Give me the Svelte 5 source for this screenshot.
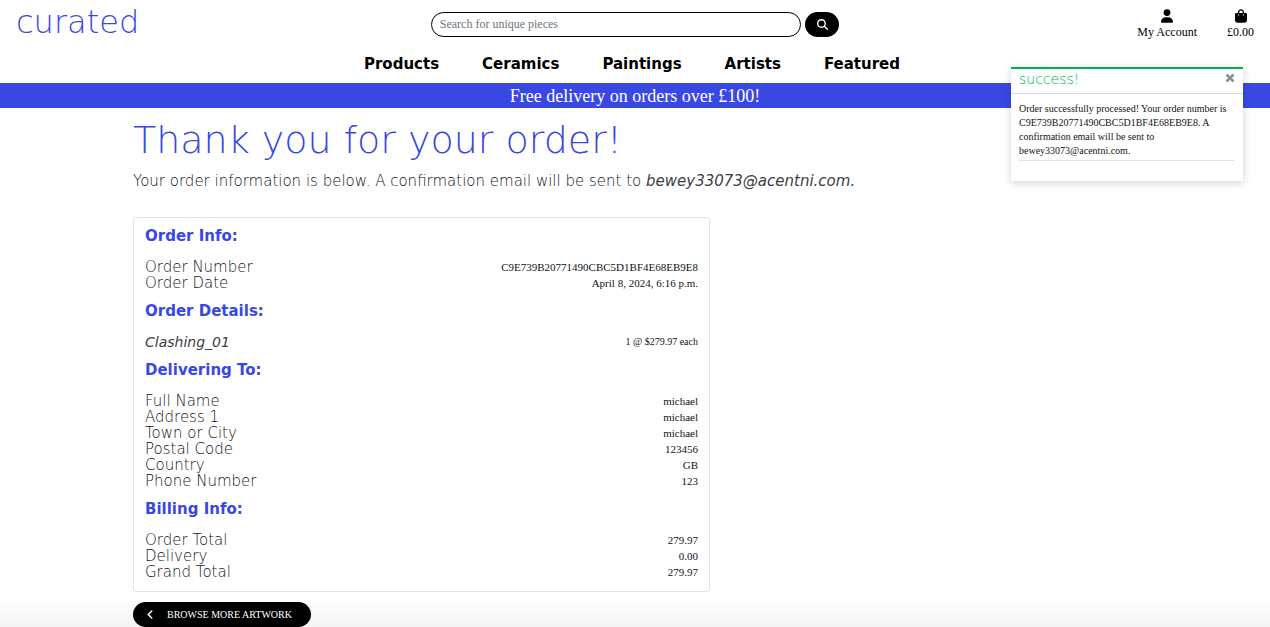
<script>
  const navItems = ['Products', 'Ceramics', 'Paintings', 'Artists', 'Featured'];
  const email = 'bewey33073@acentni.com';
  const orderNumber = 'C9E739B20771490CBC5D1BF4E68EB9E8';

  const sections = [
    {
      title: 'Order Info:',
      rows: [
        { label: 'Order Number', value: orderNumber },
        { label: 'Order Date', value: 'April 8, 2024, 6:16 p.m.' }
      ]
    },
    {
      title: 'Order Details:',
      rows: [{ label: 'Clashing_01', value: '1 @ $279.97 each', item: true }]
    },
    {
      title: 'Delivering To:',
      rows: [
        { label: 'Full Name', value: 'michael' },
        { label: 'Address 1', value: 'michael' },
        { label: 'Town or City', value: 'michael' },
        { label: 'Postal Code', value: '123456' },
        { label: 'Country', value: 'GB' },
        { label: 'Phone Number', value: '123' }
      ]
    },
    {
      title: 'Billing Info:',
      rows: [
        { label: 'Order Total', value: '279.97' },
        { label: 'Delivery', value: '0.00' },
        { label: 'Grand Total', value: '279.97' }
      ]
    }
  ];

  let query = $state('');
  let toastOpen = $state(true);
</script>

<div class="page">
  <header>
    <div class="top">
      <a class="logo" href="#home">curated</a>
      <form class="search" onsubmit={(e) => e.preventDefault()}>
        <input type="search" aria-label="Search" placeholder="Search for unique pieces" bind:value={query} />
        <button type="submit" aria-label="Search">
          <svg viewBox="0 0 512 512" width="11" height="11"><path fill="currentColor" d="M416 208c0 46-15 88-40 123l127 126c12 13 12 33 0 46s-33 12-46 0L331 376c-35 25-77 40-123 40C93 416 0 323 0 208S93 0 208 0s208 93 208 208zM208 352a144 144 0 1 0 0-288 144 144 0 1 0 0 288z" /></svg>
        </button>
      </form>
      <div class="links">
        <a href="#account">
          <svg viewBox="0 0 448 512" width="12" height="14"><path fill="currentColor" d="M224 256a128 128 0 1 0 0-256 128 128 0 1 0 0 256zm-46 48C80 304 0 384 0 482c0 17 13 30 30 30h388c17 0 30-13 30-30 0-98-80-178-178-178z" /></svg>
          <span>My Account</span>
        </a>
        <a href="#bag">
          <svg viewBox="0 0 448 512" width="12" height="14"><path fill="currentColor" d="M112 112C112 50 162 0 224 0s112 50 112 112v32h64c26 0 48 22 48 48v224c0 53-43 96-96 96H96c-53 0-96-43-96-96V192c0-26 22-48 48-48h64zm48 32h128v-32c0-35-29-64-64-64s-64 29-64 64zm-24 96a24 24 0 1 0 0-48 24 24 0 1 0 0 48zm200-24a24 24 0 1 0-48 0 24 24 0 1 0 48 0z" /></svg>
          <span>£0.00</span>
        </a>
      </div>
    </div>
    <nav>
      {#each navItems as item}
        <a href="#{item.toLowerCase()}">{item}</a>
      {/each}
    </nav>
  </header>

  <div class="banner">Free delivery on orders over £100!</div>

  <main>
    <h1>Thank you for your order!</h1>
    <p class="intro">Your order information is below. A confirmation email will be sent to <em>{email}.</em></p>

    <div class="card">
      {#each sections as section}
        <section>
          <h2>{section.title}</h2>
          <dl>
            {#each section.rows as row}
              <div class="row" class:item={row.item}>
                <dt>{row.label}</dt>
                <dd>{row.value}</dd>
              </div>
            {/each}
          </dl>
        </section>
      {/each}
    </div>

    <a class="browse" href="#products">
      <svg viewBox="0 0 6 10" width="6" height="9"><path d="M5 1 1 5l4 4" fill="none" stroke="currentColor" stroke-width="1.6" stroke-linecap="round" stroke-linejoin="round" /></svg>
      <span>BROWSE MORE ARTWORK</span>
    </a>
  </main>

  {#if toastOpen}
    <div class="toast" role="status">
      <div class="toast-head">
        <strong>success!</strong>
        <button type="button" aria-label="Close" onclick={() => (toastOpen = false)}>
          <svg viewBox="0 0 10 10" width="10" height="10"><path d="M1.5 1.5l7 7m0-7l-7 7" stroke="currentColor" stroke-width="2.8" /></svg>
        </button>
      </div>
      <div class="toast-body">
        <p>Order successfully processed! Your order number is {orderNumber}. A confirmation email will be sent to {email}.</p>
      </div>
    </div>
  {/if}
</div>

<style>
  :global(body) {
    background: #fff;
  }

  .page {
    --blue: #3948e2;
    --wide: 'DejaVu Sans', Inter, sans-serif;
    --slab: 'Liberation Serif', serif;
    position: relative;
    box-sizing: border-box;
    min-height: 100vh;
    color: #111315;
    font: 12px/16px var(--slab);
    background: linear-gradient(to top, #f4f4f4, #fff 30px);
  }

  a {
    color: inherit;
    text-decoration: none;
  }

  svg {
    display: block;
  }

  header {
    box-sizing: border-box;
    height: 83px;
    color: #000;
  }

  .top {
    display: grid;
    grid-template-columns: 1fr 33% 1fr;
    align-items: start;
    padding: 8px 16px 0;
  }

  .logo {
    color: var(--blue);
    font: 200 32px/28px var(--wide);
  }

  .search {
    display: flex;
    gap: 4px;
    padding-top: 4px;
  }

  .search input {
    flex: 1;
    min-width: 0;
    height: 25px;
    box-sizing: border-box;
    padding: 0 8px;
    border: 1px solid #000;
    border-radius: 13px;
    background: #fff;
    font: 12px/16px var(--slab);
  }

  .search input::placeholder {
    color: #6c757d;
    opacity: 1;
  }

  .search button {
    display: grid;
    place-items: center;
    width: 34px;
    height: 25px;
    padding: 0;
    border: 0;
    border-radius: 13px;
    background: #000;
    color: #fff;
  }

  .links {
    display: flex;
    justify-content: flex-end;
    gap: 30px;
  }

  .links a {
    display: flex;
    flex-direction: column;
    align-items: center;
    gap: 1px;
    padding-top: 1px;
  }

  nav {
    display: flex;
    justify-content: center;
    gap: 43px;
    padding: 16px 6px 0 0;
    font: 700 15px/16px var(--wide);
  }

  .banner {
    padding: 3px 0 2px;
    background: var(--blue);
    color: #fff;
    font-size: 18px;
    line-height: 20px;
    text-align: center;
  }

  main {
    padding: 16px 133px 0;
  }

  h1 {
    margin: 0;
    color: var(--blue);
    font: 200 38px/32px var(--wide);
  }

  .intro {
    margin: 17px 0 28px;
    font: 200 15px/16px var(--wide);
  }

  .intro em {
    color: #3c4043;
  }

  .card {
    box-sizing: border-box;
    max-width: 577px;
    padding: 10px 11px 11px;
    border: 1px solid #dee2e6;
    border-radius: 3px;
    background: #fff;
  }

  section + section {
    margin-top: 12px;
  }

  h2 {
    margin: 0 0 15px;
    color: var(--blue);
    font: 700 15px/16px var(--wide);
  }

  dl,
  dd {
    margin: 0;
  }

  .row {
    display: flex;
    justify-content: space-between;
  }

  dt {
    font: 200 15px/16px var(--wide);
  }

  dd {
    font-size: 11px;
  }

  .item dt {
    color: #3c4043;
    font-size: 14px;
    font-style: italic;
  }

  .item dd {
    font-size: 10px;
  }

  .browse {
    display: inline-flex;
    align-items: center;
    gap: 14px;
    height: 25px;
    margin-top: 10px;
    padding: 0 19px 0 14px;
    border-radius: 13px;
    background: #000;
    color: #fff;
    font-size: 10px;
    vertical-align: top;
  }

  .toast {
    position: absolute;
    top: 67px;
    right: 27px;
    box-sizing: border-box;
    width: 232px;
    padding-bottom: 20px;
    border-top: 2px solid #00b050;
    background: #fff;
    box-shadow: 0 2px 8px rgba(0, 0, 0, 0.18);
  }

  .toast-head {
    display: flex;
    justify-content: space-between;
    padding: 2px 8px 6px;
    border-bottom: 1px solid #d5d5e3;
  }

  .toast-head strong {
    color: #00b050;
    font: 200 14px/16px var(--wide);
  }

  .toast-head button {
    display: grid;
    place-items: center;
    width: 11px;
    height: 14px;
    padding: 0;
    border: 0;
    background: none;
    color: #8e9195;
  }

  .toast-body {
    padding: 8px 8px 0;
  }

  .toast-body p {
    margin: 0;
    padding-bottom: 2px;
    border-bottom: 1px solid #dee2e6;
    font-size: 10px;
    line-height: 14px;
  }
</style>
